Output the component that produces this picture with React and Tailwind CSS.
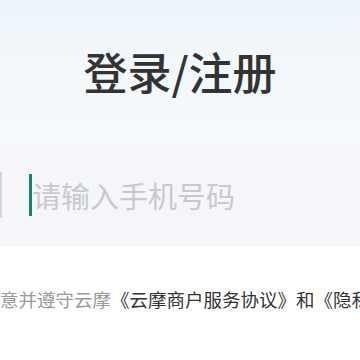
export default function App() {
  return (
    <div
      className="w-[360px] h-[360px] overflow-hidden bg-gradient-to-b from-[#eef5fa] via-[#f8fbfd] to-white"
      style={{ fontFamily: '"Noto Sans CJK SC", "Noto Sans", sans-serif' }}
    >
      <div className="pt-[41px] h-[144px]">
        <h1 className="text-center text-[44px] leading-[60px] font-medium text-[#333333]">登录/注册</h1>
      </div>
      <div className="h-[102px] bg-[#f5f6fa] flex items-center">
        <div className="w-[2px] h-[46px] bg-[#d4d4d6]" />
        <div className="ml-[27px] w-[3px] h-[42px] bg-[#11876f]" />
        <span className="text-[29px] leading-[42px] text-[#c8c9cc] whitespace-nowrap">请输入手机号码</span>
      </div>
      <div className="bg-white h-[114px]">
        <div className="pt-[40px] whitespace-nowrap text-[18.5px] leading-[26px] overflow-hidden">
          <span className="text-[#9a9a9a]">意并遵守云摩</span>
          <span className="text-[#333333]">《云摩商户服务协议》和《隐私政策》</span>
        </div>
      </div>
    </div>
  );
}
